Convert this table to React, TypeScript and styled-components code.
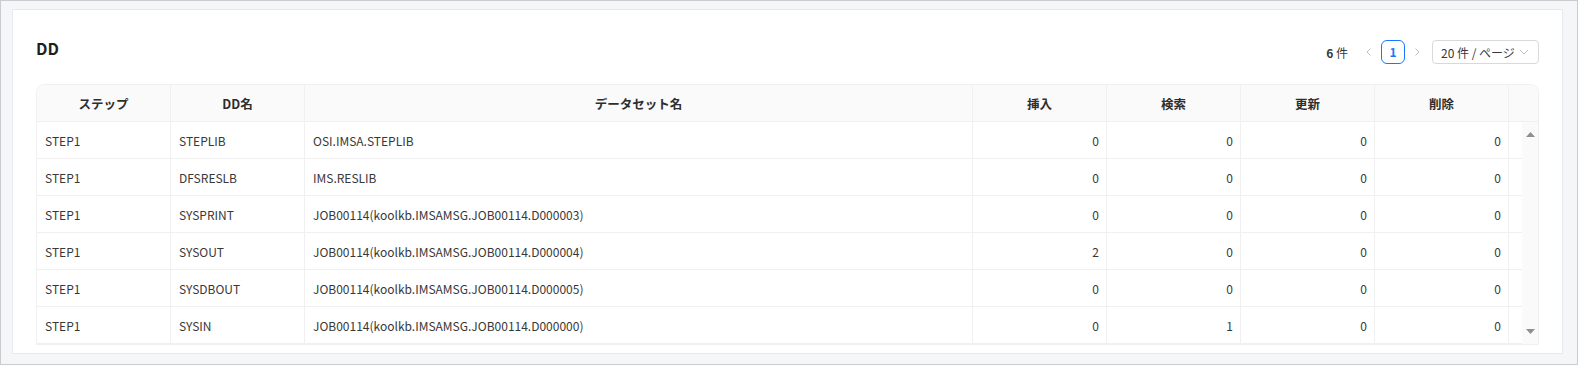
import React from "react";
import styled, { createGlobalStyle } from "styled-components";

const GlobalStyle = createGlobalStyle`
  html, body {
    margin: 0;
    padding: 0;
    background: #f5f6f8;
  }
  * {
    box-sizing: border-box;
  }
`;

const colours = {
  frame: "#c9cbcf",
  page: "#f5f6f8",
  card: "#ffffff",
  cardBorder: "#e7e9ec",
  line: "#f0f0f0",
  headBg: "#fafafa",
  text: "#383838",
  title: "#1f1f1f",
  muted: "#bfbfbf",
  blue: "#1677ff",
};

const font = `"Noto Sans CJK JP", "Noto Sans", sans-serif`;

const Frame = styled("div")`
  width: 1578px;
  height: 365px;
  border: 1px solid ${colours.frame};
  background: ${colours.page};
  padding: 8px 14px 10px 11px;
  display: flex;
  flex-direction: column;
  font-family: ${font};
  color: ${colours.text};
`;

const Card = styled("section")`
  flex: 1;
  background: ${colours.card};
  border: 1px solid ${colours.cardBorder};
  padding: 30px 23px 0 23px;
  display: flex;
  flex-direction: column;
`;

const TopBar = styled("div")`
  display: flex;
  align-items: flex-start;
  justify-content: space-between;
  height: 24px;
  margin-bottom: 20px;
`;

const Title = styled("h2")`
  margin: -2px 0 0 0;
  font-size: 16px;
  line-height: 20px;
  font-weight: 700;
  color: ${colours.title};
`;

const Pager = styled("div")`
  display: flex;
  align-items: center;
  height: 24px;
  font-size: 12px;
`;

const Total = styled("span")`
  margin-right: 9px;
  color: ${colours.text};
  b {
    font-weight: 700;
  }
`;

const Arrow = styled("span")`
  width: 24px;
  height: 24px;
  display: flex;
  align-items: center;
  justify-content: center;
`;

const PageBox = styled("span")`
  width: 24px;
  height: 24px;
  border: 1px solid ${colours.blue};
  border-radius: 6px;
  color: ${colours.blue};
  font-weight: 600;
  display: flex;
  align-items: center;
  justify-content: center;
  line-height: 1;
`;

const SizeSelect = styled("div")`
  margin-left: 3px;
  width: 107px;
  height: 24px;
  border: 1px solid #d9d9d9;
  border-radius: 4px;
  padding: 0 9px 0 8px;
  display: flex;
  align-items: center;
  justify-content: space-between;
  color: ${colours.text};
  white-space: nowrap;
`;

const Table = styled("div")`
  border: 1px solid ${colours.line};
  border-radius: 8px 8px 0 0;
  overflow: hidden;
  font-size: 12px;
`;

const HeadRow = styled("div")`
  display: grid;
  grid-template-columns: 134px 134px 1fr 134px 134px 134px 134px 29px;
  height: 37px;
  background: ${colours.headBg};
  border-bottom: 1px solid ${colours.line};
`;

const HeadCell = styled("div")<{ $last?: boolean }>`
  display: flex;
  align-items: center;
  justify-content: center;
  font-size: 12.5px;
  font-weight: 700;
  color: #2e2e2e;
  border-right: ${(p) => (p.$last ? "none" : `1px solid ${colours.line}`)};
`;

const Body = styled("div")`
  display: flex;
`;

const Rows = styled("div")`
  flex: 1;
`;

const Row = styled("div")`
  display: grid;
  grid-template-columns: 134px 134px 1fr 134px 134px 134px 134px 13px;
  height: 37px;
  border-bottom: 1px solid ${colours.line};
`;

const Cell = styled("div")<{ $num?: boolean }>`
  display: flex;
  align-items: center;
  justify-content: ${(p) => (p.$num ? "flex-end" : "flex-start")};
  padding: 0 7px 0 8px;
  border-right: 1px solid ${colours.line};
  color: ${colours.text};
  white-space: nowrap;
`;

const Filler = styled("div")``;

const ScrollBar = styled("div")`
  width: 16px;
  background: ${colours.headBg};
  display: flex;
  flex-direction: column;
  justify-content: space-between;
  align-items: center;
  padding: 10px 0 10px 0;
`;

const Chevron = ({ dir, size = 10 }: { dir: "left" | "right" | "down"; size?: number }) => {
  const d =
    dir === "left"
      ? "M6.5 1.5 L3 5 L6.5 8.5"
      : dir === "right"
      ? "M3.5 1.5 L7 5 L3.5 8.5"
      : "M1 3 L5 7 L9 3";
  return (
    <svg width={size} height={size} viewBox="0 0 10 10">
      <path d={d} fill="none" stroke={colours.muted} strokeWidth="1" />
    </svg>
  );
};

const Triangle = ({ up }: { up?: boolean }) => (
  <svg width="9" height="5" viewBox="0 0 9 5">
    <polygon points={up ? "0,5 9,5 4.5,0" : "0,0 9,0 4.5,5"} fill="#8f8f8f" />
  </svg>
);

const columns = ["ステップ", "DD名", "データセット名", "挿入", "検索", "更新", "削除"];

const rows = [
  ["STEP1", "STEPLIB", "OSI.IMSA.STEPLIB", 0, 0, 0, 0],
  ["STEP1", "DFSRESLB", "IMS.RESLIB", 0, 0, 0, 0],
  ["STEP1", "SYSPRINT", "JOB00114(koolkb.IMSAMSG.JOB00114.D000003)", 0, 0, 0, 0],
  ["STEP1", "SYSOUT", "JOB00114(koolkb.IMSAMSG.JOB00114.D000004)", 2, 0, 0, 0],
  ["STEP1", "SYSDBOUT", "JOB00114(koolkb.IMSAMSG.JOB00114.D000005)", 0, 0, 0, 0],
  ["STEP1", "SYSIN", "JOB00114(koolkb.IMSAMSG.JOB00114.D000000)", 0, 1, 0, 0],
];

export const App = () => {
  return (
    <Frame>
      <GlobalStyle />
      <Card>
        <TopBar>
          <Title>DD</Title>
          <Pager>
            <Total>
              <b>6</b> 件
            </Total>
            <Arrow>
              <Chevron dir="left" />
            </Arrow>
            <PageBox>1</PageBox>
            <Arrow>
              <Chevron dir="right" />
            </Arrow>
            <SizeSelect>
              <span>20 件 / ページ</span>
              <Chevron dir="down" />
            </SizeSelect>
          </Pager>
        </TopBar>
        <Table>
          <HeadRow>
            {columns.map((c) => (
              <HeadCell key={c}>{c}</HeadCell>
            ))}
            <HeadCell $last />
          </HeadRow>
          <Body>
            <Rows>
              {rows.map((r, i) => (
                <Row key={i}>
                  {r.map((v, j) => (
                    <Cell key={j} $num={j > 2}>
                      {v}
                    </Cell>
                  ))}
                  <Filler />
                </Row>
              ))}
            </Rows>
            <ScrollBar>
              <Triangle up />
              <Triangle />
            </ScrollBar>
          </Body>
        </Table>
      </Card>
    </Frame>
  );
};

export default App;
